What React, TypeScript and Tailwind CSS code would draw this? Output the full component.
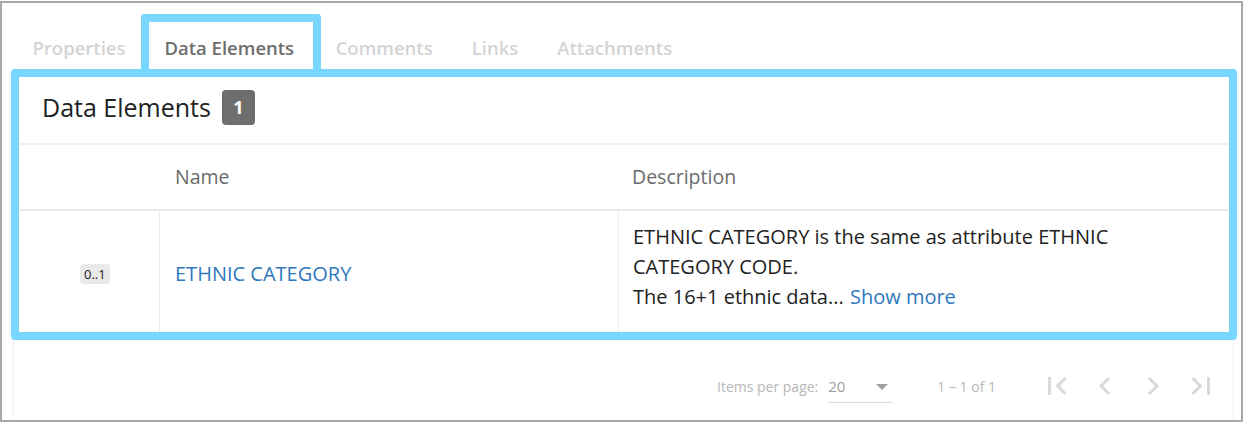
import React from 'react';

const tabs = ['Properties', 'Data Elements', 'Comments', 'Links', 'Attachments'];

function PageIcon({ d }: { d: string }) {
  return (
    <button className="w-[48px] h-[36px] flex items-center justify-center text-[#d9d9d9]">
      <svg viewBox="0 0 24 24" className="w-[36px] h-[36px]" fill="currentColor">
        <path d={d} />
      </svg>
    </button>
  );
}

export default function App() {
  return (
    <div className="w-[1245px] h-[427px] bg-white pt-px" style={{ fontFamily: '"Open Sans", Lato, sans-serif' }}>
      <div className="w-[1243px] h-[421px] border-2 border-[#a8a8a8] flex flex-col pl-[11px] pr-[7px]">
        {/* tabs */}
        <div className="h-[70px] flex shrink-0">
          {tabs.map((t) => {
            const active = t === 'Data Elements';
            return (
              <div key={t} className={`relative h-full flex items-end pl-[19.5px] pb-[12px] ${active ? 'pr-[22px]' : 'pr-[19.5px]'}`}>
                <span className={`text-[18.5px] leading-[26px] font-semibold ${active ? 'text-[#6e6e6e]' : 'text-[#d4d4d4]'}`}>{t}</span>
                {active && (
                  <div className="absolute -left-[4px] -right-[5px] top-[11px] -bottom-[4px] border-8 border-b-0 border-[#79d6fe] rounded-t-[4px] pointer-events-none" />
                )}
              </div>
            );
          })}
        </div>

        {/* card */}
        <div className="flex-1 flex flex-col border-x border-[#f1f1f1]">
          <div className="relative">
            <div className="h-[72px] pl-[28px] pt-[16px] flex items-start gap-[11px] border-b-2 border-[#efefef]">
              <span className="text-[25px] leading-[36px] text-[#222]">Data Elements</span>
              <span className="w-[33px] h-[35px] mt-px rounded-[4px] bg-[#6e6e6e] text-white text-[18px] font-bold flex items-center justify-center">1</span>
            </div>
            <div className="h-[66px] grid grid-cols-[145px_459px_1fr] items-center text-[19.5px] text-[#6b6b6b] border-b-2 border-[#e8ebef]">
              <div />
              <div className="pl-4">Name</div>
              <div className="pl-[14px]">Description</div>
            </div>
            <div className="h-[125px] grid grid-cols-[145px_459px_1fr]">
              <div className="flex items-center pl-[66px]">
                <span className="h-[20px] px-[4px] rounded-[4px] bg-[#e9e9e9] text-[13px] leading-[20px] text-[#222]">0..1</span>
              </div>
              <div className="border-l border-[#e9ecf0] pl-[15px] flex items-center text-[20px] text-[#2e78bd]">ETHNIC CATEGORY</div>
              <div className="border-l border-[#e9ecf0] pl-[14px] pt-[11px] text-[20px] leading-[30px] text-[#222]">
                <div>ETHNIC CATEGORY is the same as attribute ETHNIC</div>
                <div>CATEGORY CODE.</div>
                <div>
                  The 16+1 ethnic data... <span className="ml-px text-[#2e78bd]">Show more</span>
                </div>
              </div>
            </div>
            <div className="absolute -left-[3px] -right-[4px] -top-[4px] -bottom-[4px] border-8 border-[#79d6fe] rounded-[4px] pointer-events-none" />
          </div>

          {/* paginator */}
          <div className="flex items-center justify-end pr-[8px] mt-[32px] text-[14px] text-[#b8b8b8]">
            <span>Items per page:</span>
            <div className="ml-[10px] w-[65px] h-[34px] border-b border-[#dcdcdc] flex items-center justify-between pt-[2px]">
              <span className="text-[15px] text-[#9e9e9e]">20</span>
              <span className="w-0 h-0 border-x-[6px] border-x-transparent border-t-[6px] border-t-[#a0a0a0] mr-[5px]" />
            </div>
            <span className="ml-[44px]">1 – 1 of 1</span>
            <div className="ml-[37px] flex">
              <PageIcon d="M18.41 16.59L13.82 12l4.59-4.59L17 6l-6 6 6 6zM6 6h2v12H6z" />
              <PageIcon d="M15.41 7.41L14 6l-6 6 6 6 1.41-1.41L10.83 12z" />
              <PageIcon d="M10 6L8.59 7.41 13.17 12l-4.58 4.59L10 18l6-6z" />
              <PageIcon d="M5.59 7.41L10.18 12l-4.59 4.59L7 18l6-6-6-6zM16 6h2v12h-2z" />
            </div>
          </div>
        </div>
      </div>
    </div>
  );
}
